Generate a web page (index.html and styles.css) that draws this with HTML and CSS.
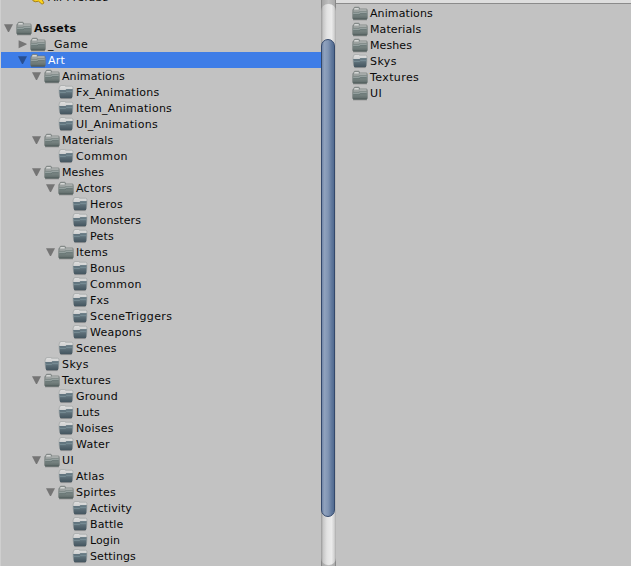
FILE: index.html
```html
<!DOCTYPE html>
<html lang="en">
<head>
<meta charset="utf-8">
<title>Project</title>
<link rel="stylesheet" href="styles.css">
</head>
<body>
<svg class="defs" width="0" height="0" aria-hidden="true">
  <defs>
    <linearGradient id="g-front" x1="0" y1="0" x2="0" y2="1"><stop offset="0" stop-color="#87918f"/><stop offset=".5" stop-color="#768280"/><stop offset="1" stop-color="#5b6766"/></linearGradient>
    <linearGradient id="g-back" x1="0" y1="0" x2="0" y2="1"><stop offset="0" stop-color="#a9adac"/><stop offset="1" stop-color="#7d8785"/></linearGradient>
    <linearGradient id="g-leaf" x1="0" y1="0" x2="0" y2="1"><stop offset="0" stop-color="#6f828b"/><stop offset="1" stop-color="#43545e"/></linearGradient>
    <linearGradient id="g-white" x1="0" y1="0" x2="0" y2="1"><stop offset="0" stop-color="#e0e0e0"/><stop offset="1" stop-color="#b4b8b9"/></linearGradient>
    <symbol id="folder" viewBox="0 0 16 16">
      <path d="M1 14.9h14" stroke="#000" stroke-opacity=".22" stroke-width="1"/>
      <path d="M.9 13.5V4.7q0-.6.6-.6h.6V3q0-.7.7-.7h3.8q.7 0 .7.7v1.1h7.1q.7 0 .7.7v8.7z" fill="url(#g-back)" stroke="#6c7472" stroke-width=".8"/>
      <path d="M2.6 3.1h4v1.5H2z" fill="#d5d7d6"/>
      <path d="M7.6 4.9h6.9" stroke="#c0c4c3" stroke-width=".8"/>
      <path d="M.7 13.6V6.9h5.8l1-.9h7.8v7.6q0 .8-.8.8h-13q-.8 0-.8-.8z" fill="url(#g-front)"/>
      <path d="M1.2 8.8h5.6l1.1-1h6.7" fill="none" stroke="#adb9b7" stroke-width=".7"/>
      <path d="M1.2 9.7h5.9l1.1-1h6.4" fill="none" stroke="#5b6d6b" stroke-width=".7"/>
      <path d="M1.2 14h13.6" stroke="#4c5857" stroke-width=".8"/>
    </symbol>
    <symbol id="leaf" viewBox="0 0 16 16">
      <path d="M2.4 14.6h11.2" stroke="#000" stroke-opacity=".22"/>
      <path d="M1.1 9V4q0-.8.9-1V2.200q0-.7.7-.7h4q.7 0 .7.7h6.100q1.400 0 1.400 1.300V9l-.8 4H2z" fill="url(#g-white)" stroke="#999d9e" stroke-width=".6"/>
      <path d="M1.200 6.100h6.200l1-.8H14.800l-.5 7.600q-.1 1.400-1.400 1.400H3.200q-1.300 0-1.400-1.400z" fill="url(#g-leaf)"/>
      <path d="M1.500 6.500h6l1-.8h6.100" fill="none" stroke="#5d717c" stroke-width=".7"/>
      <path d="M1.900 8.600h5.600l1-.9h5.700" fill="none" stroke="#8198a1" stroke-width=".7"/>
    </symbol>
    <symbol id="down" viewBox="0 0 10 10"><path d="M0 1.200h9L5 9H4z"/></symbol>
    <symbol id="right" viewBox="0 0 10 10"><path d="M.6 1.200v8L8.600 5.500v-.7z"/></symbol>
    <symbol id="search" viewBox="0 0 16 16"><circle cx="6" cy="7" r="5" fill="#f1d64b" stroke="#a18630"/><path d="M2.500 11.500q2.500 2.200 6 .7l3.500 3 2-1.200-2-3.500" fill="#ffd51c" stroke="#a27b12" stroke-width=".9"/></symbol>
  </defs>
</svg>
<main class="project">
  <nav class="tree">
    <div class="row d1 favorite"><i class="arrow"></i><svg class="icon"><use href="#search"/></svg><span>All Prefabs</span></div>
    <div class="row d0 root"><svg class="arrow"><use href="#down"/></svg><svg class="icon"><use href="#folder"/></svg><span>Assets</span></div>
    <div class="row d1"><svg class="arrow"><use href="#right"/></svg><svg class="icon"><use href="#folder"/></svg><span class="loose">_Game</span></div>
    <div class="row d1 selected"><svg class="arrow"><use href="#down"/></svg><svg class="icon"><use href="#folder"/></svg><span>Art</span></div>
    <div class="row d2"><svg class="arrow"><use href="#down"/></svg><svg class="icon"><use href="#folder"/></svg><span class="tight">Animations</span></div>
    <div class="row d3"><i class="arrow"></i><svg class="icon"><use href="#leaf"/></svg><span>Fx_Animations</span></div>
    <div class="row d3"><i class="arrow"></i><svg class="icon"><use href="#leaf"/></svg><span>Item_Animations</span></div>
    <div class="row d3"><i class="arrow"></i><svg class="icon"><use href="#leaf"/></svg><span>UI_Animations</span></div>
    <div class="row d2"><svg class="arrow"><use href="#down"/></svg><svg class="icon"><use href="#folder"/></svg><span class="tight">Materials</span></div>
    <div class="row d3"><i class="arrow"></i><svg class="icon"><use href="#leaf"/></svg><span class="loose">Common</span></div>
    <div class="row d2"><svg class="arrow"><use href="#down"/></svg><svg class="icon"><use href="#folder"/></svg><span class="tight">Meshes</span></div>
    <div class="row d3"><svg class="arrow"><use href="#down"/></svg><svg class="icon"><use href="#folder"/></svg><span>Actors</span></div>
    <div class="row d4"><i class="arrow"></i><svg class="icon"><use href="#leaf"/></svg><span>Heros</span></div>
    <div class="row d4"><i class="arrow"></i><svg class="icon"><use href="#leaf"/></svg><span class="tight">Monsters</span></div>
    <div class="row d4"><i class="arrow"></i><svg class="icon"><use href="#leaf"/></svg><span>Pets</span></div>
    <div class="row d3"><svg class="arrow"><use href="#down"/></svg><svg class="icon"><use href="#folder"/></svg><span>Items</span></div>
    <div class="row d4"><i class="arrow"></i><svg class="icon"><use href="#leaf"/></svg><span>Bonus</span></div>
    <div class="row d4"><i class="arrow"></i><svg class="icon"><use href="#leaf"/></svg><span class="loose">Common</span></div>
    <div class="row d4"><i class="arrow"></i><svg class="icon"><use href="#leaf"/></svg><span>Fxs</span></div>
    <div class="row d4"><i class="arrow"></i><svg class="icon"><use href="#leaf"/></svg><span class="loose">SceneTriggers</span></div>
    <div class="row d4"><i class="arrow"></i><svg class="icon"><use href="#leaf"/></svg><span>Weapons</span></div>
    <div class="row d3"><i class="arrow"></i><svg class="icon"><use href="#leaf"/></svg><span>Scenes</span></div>
    <div class="row d2"><i class="arrow"></i><svg class="icon"><use href="#leaf"/></svg><span class="loose">Skys</span></div>
    <div class="row d2"><svg class="arrow"><use href="#down"/></svg><svg class="icon"><use href="#folder"/></svg><span class="loose">Textures</span></div>
    <div class="row d3"><i class="arrow"></i><svg class="icon"><use href="#leaf"/></svg><span>Ground</span></div>
    <div class="row d3"><i class="arrow"></i><svg class="icon"><use href="#leaf"/></svg><span>Luts</span></div>
    <div class="row d3"><i class="arrow"></i><svg class="icon"><use href="#leaf"/></svg><span>Noises</span></div>
    <div class="row d3"><i class="arrow"></i><svg class="icon"><use href="#leaf"/></svg><span>Water</span></div>
    <div class="row d2"><svg class="arrow"><use href="#down"/></svg><svg class="icon"><use href="#folder"/></svg><span class="loose">UI</span></div>
    <div class="row d3"><i class="arrow"></i><svg class="icon"><use href="#leaf"/></svg><span>Atlas</span></div>
    <div class="row d3"><svg class="arrow"><use href="#down"/></svg><svg class="icon"><use href="#folder"/></svg><span>Spirtes</span></div>
    <div class="row d4"><i class="arrow"></i><svg class="icon"><use href="#leaf"/></svg><span class="tight">Activity</span></div>
    <div class="row d4"><i class="arrow"></i><svg class="icon"><use href="#leaf"/></svg><span class="tight">Battle</span></div>
    <div class="row d4"><i class="arrow"></i><svg class="icon"><use href="#leaf"/></svg><span class="tight">Login</span></div>
    <div class="row d4"><i class="arrow"></i><svg class="icon"><use href="#leaf"/></svg><span class="tight">Settings</span></div>
  </nav>
  <div class="scrollbar"><div class="track"><div class="thumb"></div></div></div>
  <section class="contents">
    <header class="path"></header>
    <div class="list">
      <div class="row"><svg class="icon"><use href="#folder"/></svg><span class="tight">Animations</span></div>
      <div class="row"><svg class="icon"><use href="#folder"/></svg><span class="tight">Materials</span></div>
      <div class="row"><svg class="icon"><use href="#folder"/></svg><span class="tight">Meshes</span></div>
      <div class="row"><svg class="icon"><use href="#leaf"/></svg><span class="loose">Skys</span></div>
      <div class="row"><svg class="icon"><use href="#folder"/></svg><span class="loose">Textures</span></div>
      <div class="row"><svg class="icon"><use href="#folder"/></svg><span class="loose">UI</span></div>
    </div>
  </section>
</main>
</body>
</html>
```
FILE: styles.css
```css
* { box-sizing: border-box; }
body {
  margin: 0;
  height: 566px;
  overflow: hidden;
  background: #c2c2c2;
  color: #090909;
  font: 11px/16px "DejaVu Sans", sans-serif;
}
.defs { display: block; height: 0; }
.project { display: flex; height: 566px; overflow: hidden; }
.tree { width: 321px; border-left: 1px solid #cfcfcf; overflow: hidden; }
.row { display: flex; align-items: center; height: 16px; white-space: nowrap; letter-spacing: 0.25px; }
.row span { padding-top: 2px; }
.row .tight { letter-spacing: 0.1px; }
.row .loose { letter-spacing: 0.4px; }
.icon { flex: none; width: 16px; height: 16px; margin-right: 2px; }
.arrow { flex: none; width: 10px; height: 10px; margin-right: 2px; fill: #757575; }
.d0 { padding-left: 3px; }
.d1 { padding-left: 17px; }
.d2 { padding-left: 31px; }
.d3 { padding-left: 45px; }
.d4 { padding-left: 59px; }
.favorite { margin-top: -11px; margin-bottom: 15px; }
.root { font-weight: bold; }
.selected { background: #3e7de7; color: #fff; }
.selected .arrow { fill: #284f91; }
.scrollbar {
  width: 15px;
  padding: 4px 0 1px;
  background: linear-gradient(90deg, #888 0 1px, #a5a5a5 1px, #bebebe 50%, #aaa 14px, #888 14px);
}
.track {
  height: 561px;
  padding-top: 35px;
  border-radius: 7px;
  background: linear-gradient(90deg, #999, #c8c8c8 15%, #e2e2e2 40%, #ebebeb 70%, #d2d2d2 88%, #aaa);
}
.thumb {
  width: 14px;
  height: 478px;
  border: 1px solid #33486b;
  border-radius: 7px;
  background: linear-gradient(90deg, #7186a8, #90a2bd 20%, #8195b4 50%, #60789c 80%, #506a90);
}
.contents { flex: 1; }
.path { height: 4px; background: #dedede; border-bottom: 1px solid #8b8b8b; }
.list { padding: 1px 0 0 16px; }
```
